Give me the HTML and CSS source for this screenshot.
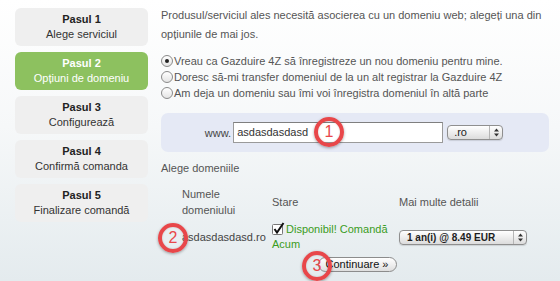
FILE: index.html
```html
<!DOCTYPE html>
<html lang="ro">
<head>
<meta charset="utf-8">
<title>Opțiuni de domeniu</title>
<link rel="stylesheet" href="styles.css">
</head>
<body>
<div class="page">
  <aside class="steps">
    <div class="step"><b>Pasul 1</b><span>Alege serviciul</span></div>
    <div class="step active"><b>Pasul 2</b><span>Opțiuni de domeniu</span></div>
    <div class="step"><b>Pasul 3</b><span>Configurează</span></div>
    <div class="step"><b>Pasul 4</b><span>Confirmă comanda</span></div>
    <div class="step"><b>Pasul 5</b><span>Finalizare comandă</span></div>
  </aside>
  <main class="content">
    <p class="intro">Produsul/serviciul ales necesită asocierea cu un domeniu web; alegeți una din opțiunile de mai jos.</p>
    <ul class="options">
      <li><span class="radio checked"></span>Vreau ca Gazduire 4Z să înregistreze un nou domeniu pentru mine.</li>
      <li><span class="radio"></span>Doresc să-mi transfer domeniul de la un alt registrar la Gazduire 4Z</li>
      <li><span class="radio"></span>Am deja un domeniu sau îmi voi înregistra domeniul în altă parte</li>
    </ul>
    <div class="domain-box">
      <span class="www">www.</span>
      <div class="text-input">asdasdasdasd</div>
      <div class="select select-tld"><span class="select-label">.ro</span><span class="arrows"><svg width="7" height="9" viewBox="0 0 7 9"><path d="M3.5 0.5 L6 3.5 H1 Z M3.5 8.5 L6 5.5 H1 Z" fill="#333"/></svg></span></div>
    </div>
    <div class="label">Alege domeniile</div>
    <div class="grid">
      <div class="th">Numele<br>domeniului</div>
      <div class="th">Stare</div>
      <div class="th">Mai multe detalii</div>
      <div class="td">asdasdasdasd.ro</div>
      <div class="td status"><span class="check"><svg width="13" height="13" viewBox="0 0 13 13"><rect x="0.5" y="2.5" width="10" height="10" rx="1" fill="#fff" stroke="#777"/><path d="M2.5 7 L5 10.5 L11.5 1" fill="none" stroke="#111" stroke-width="2"/></svg></span><span class="avail">Disponibil! Comandă Acum</span></div>
      <div class="td"><div class="select select-period"><span class="select-label">1 an(i) @ 8.49 EUR</span><span class="arrows"><svg width="7" height="9" viewBox="0 0 7 9"><path d="M3.5 0.5 L6 3.5 H1 Z M3.5 8.5 L6 5.5 H1 Z" fill="#333"/></svg></span></div></div>
    </div>
    <div class="actions"><button class="btn" type="button">Continuare »</button></div>
  </main>
  <div class="marker m1">1</div>
  <div class="marker m2">2</div>
  <div class="marker m3">3</div>
</div>
</body>
</html>
```

FILE: styles.css
```css
* { box-sizing: border-box; }
html, body { margin: 0; padding: 0; }
body {
  width: 560px;
  height: 281px;
  overflow: hidden;
  font-family: "Liberation Sans", Arial, sans-serif;
  font-size: 11px;
  color: #555;
  background: linear-gradient(to bottom, #ffffff 0%, #f6f8f9 45%, #e4ebee 100%);
}
.page {
  position: relative;
  display: flex;
  height: 281px;
}
.steps {
  width: 133px;
  margin: 8px 13px 0 15px;
  display: flex;
  flex-direction: column;
  gap: 6px;
}
.step {
  height: 38px;
  padding: 4px 0;
  border-radius: 6px;
  background: #efefef;
  display: flex;
  flex-direction: column;
  align-items: center;
  line-height: 15px;
  color: #333;
}
.step b { font-weight: bold; color: #222; }
.step.active { background: #8dc15f; color: #fff; }
.step.active b { color: #fff; }
.content {
  width: 388px;
  display: flex;
  flex-direction: column;
}
.intro {
  margin: 6px 0 0;
  line-height: 19px;
}
.options {
  list-style: none;
  margin: 9px 0 0;
  padding: 0;
  line-height: 16px;
}
.options li { display: flex; align-items: center; }
.radio {
  width: 12px;
  height: 12px;
  margin-right: 1px;
  border-radius: 50%;
  border: 1px solid #8a8a8a;
  background: linear-gradient(#ffffff, #e4e4e4);
  display: flex;
  align-items: center;
  justify-content: center;
}
.radio.checked::after {
  content: "";
  width: 4px;
  height: 4px;
  border-radius: 50%;
  background: #222;
}
.domain-box {
  margin-top: 12px;
  height: 39px;
  border-radius: 7px;
  background: #e5e9f5;
  display: flex;
  align-items: center;
  justify-content: center;
  padding-right: 2px;
}
.www { margin-right: 2px; color: #444; }
.text-input {
  width: 210px;
  height: 21px;
  border: 1px solid #9a9a9a;
  border-top-color: #7f7f7f;
  background: #fff;
  padding: 0 0 0 3px;
  line-height: 19px;
  color: #333;
  margin-right: 4px;
}
.select {
  display: flex;
  align-items: center;
  height: 15px;
  border: 1px solid #8f8f8f;
  border-radius: 4px;
  background: linear-gradient(#ffffff, #eaeaea 60%, #dcdcdc);
  box-shadow: 0 1px 1px rgba(0,0,0,0.12);
  color: #222;
}
.select-label { flex: 1; padding-left: 6px; line-height: 13px; }
.arrows {
  width: 13px;
  height: 13px;
  border-left: 1px solid #b5b5b5;
  display: flex;
  align-items: center;
  justify-content: center;
}
.select-tld { width: 56px; font-size: 11px; }
.select-period { width: 128px; font-size: 10px; font-weight: bold; }
.select-period .select-label { padding-left: 7px; color: #1e1e1e; }
.label {
  margin-top: 9px;
  line-height: 14px;
  color: #555;
}
.grid {
  display: grid;
  grid-template-columns: 90px 127px 1fr;
  margin: 11px 0 0 21px;
  align-items: center;
}
.th { line-height: 16px; color: #555; }
.td { line-height: 15px; color: #444; margin-top: 4px; }
.status { display: block; }
.check { display: inline-block; width: 13px; height: 13px; vertical-align: -2px; margin-right: 1px; }
.avail { color: #3a9c22; }
.actions {
  display: flex;
  justify-content: center;
  margin-top: 5px;
  padding-left: 4px;
}
.btn {
  width: 79px;
  height: 15px;
  padding: 0;
  border: 1px solid #8c8c8c;
  border-radius: 8px;
  background: linear-gradient(#ffffff, #ececec 60%, #dedede);
  font-family: "Liberation Sans", Arial, sans-serif;
  font-size: 11px;
  line-height: 13px;
  color: #111;
}
.marker {
  position: absolute;
  width: 30px;
  height: 30px;
  border: 4px solid #e8474a;
  border-radius: 50%;
  box-shadow: 0 1px 3px rgba(0,0,0,0.35), inset 0 0 2px rgba(0,0,0,0.2);
  color: #e8474a;
  font-size: 16px;
  line-height: 22px;
  text-align: center;
}
.m1 { left: 314px; top: 117px; }
.m2 { left: 158px; top: 223px; }
.m3 { left: 302px; top: 251px; }
```
